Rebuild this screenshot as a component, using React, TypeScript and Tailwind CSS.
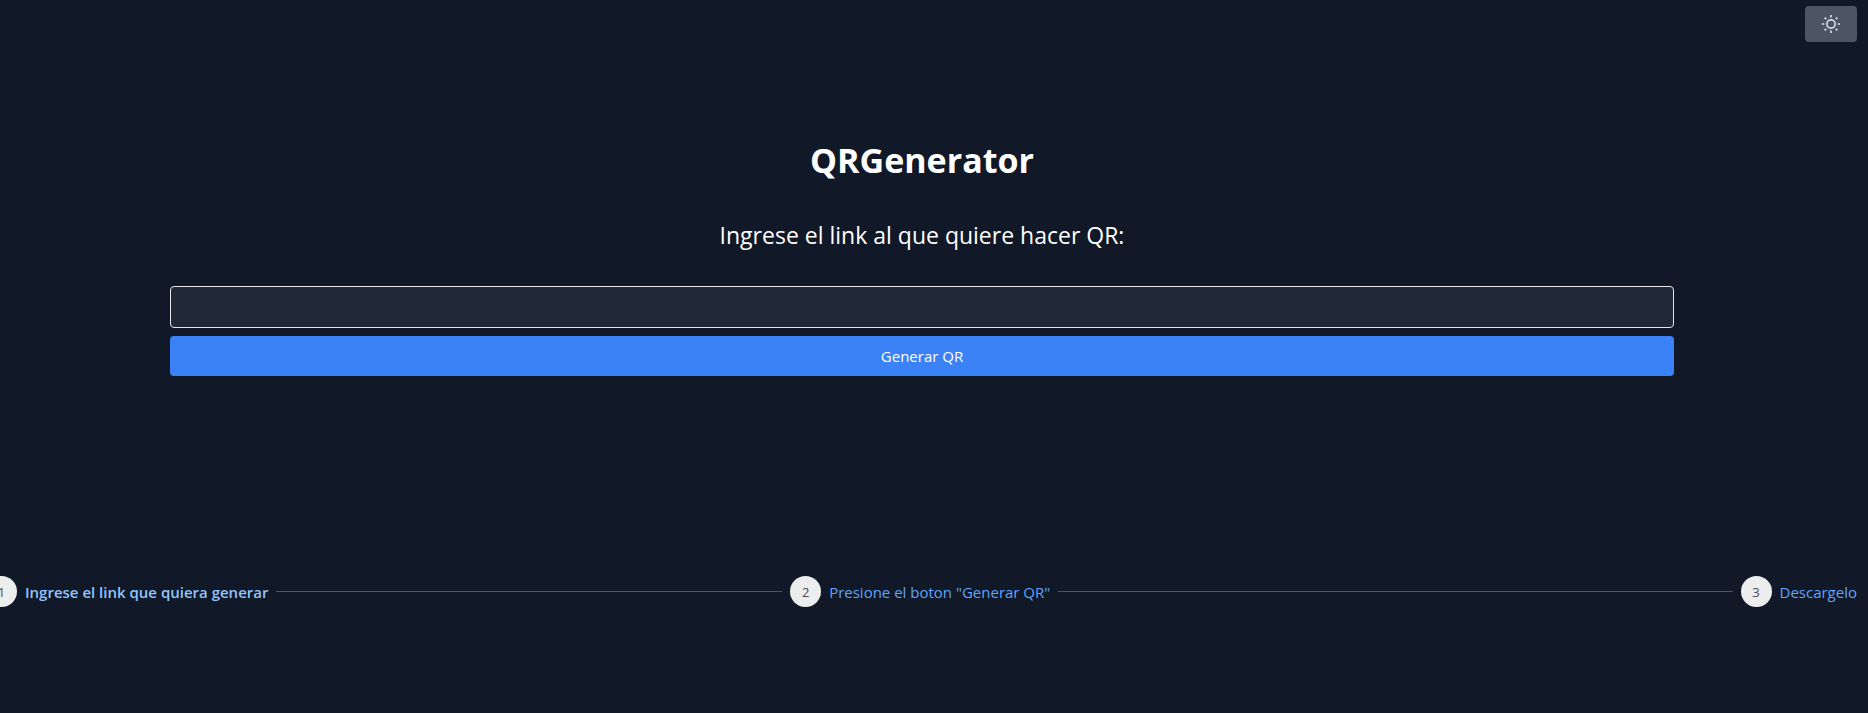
import { useState } from "react";

const steps = [
  { label: "Ingrese el link que quiera generar", text: "font-semibold text-[#93c5fd]", line: "grow-3" },
  { label: 'Presione el boton "Generar QR"', text: "text-[#60a5fa]", line: "grow-4" },
  { label: "Descargelo", text: "text-[#60a5fa]", line: "" },
];

function SunIcon() {
  return (
    <svg viewBox="0 0 20 20" className="size-5" fill="none" stroke="currentColor" strokeWidth="1.7" aria-hidden="true">
      <circle cx="10" cy="10" r="4.1" />
      <path d="M10 1v2.400M10 16.600v2.400M1 10h2.400M16.600 10h2.400M3.600 3.600l1.600 1.600M14.800 14.800l1.600 1.600M3.600 16.400l1.600-1.600M14.800 5.200l1.600-1.600" />
    </svg>
  );
}

export default function App() {
  const [link, setLink] = useState("");
  return (
    <div className="flex min-h-screen flex-col overflow-x-hidden bg-[#111827] pr-[11px] font-['Open_Sans','Noto_Sans',sans-serif] text-white">
      <header className="flex justify-end pt-1.5">
        <button type="button" aria-label="Cambiar tema" className="flex h-9 w-[52px] items-center justify-center rounded bg-[#4b5563] text-[#d8dbe0]">
          <SunIcon />
        </button>
      </header>
      <main className="-ml-3.5 flex flex-col">
        <form onSubmit={(e) => e.preventDefault()} className="mr-[183px] ml-[184px] mt-[98px] flex flex-col">
          <h1 className="text-center text-[34px]/10 font-bold">QRGenerator</h1>
          <label htmlFor="link" className="mt-[39px] text-center text-[23px]/8">
            Ingrese el link al que quiere hacer QR:
          </label>
          <input
            id="link"
            type="text"
            value={link}
            onChange={(e) => setLink(e.target.value)}
            className="mt-[35px] h-[42px] rounded border border-[#e5e7eb] bg-[#1f2937] px-2"
          />
          <button type="submit" className="mt-2 h-10 rounded bg-[#3b82f6] text-[15px]/6">
            Generar QR
          </button>
        </form>
        <ol className="mt-[200px] flex items-center gap-2 text-[15px]/6">
          {steps.map((step, i) => (
            <li key={step.label} className="contents">
              <span className="flex size-[31px] shrink-0 items-center justify-center rounded-full bg-[#eceded] text-[13px]/5 text-[#4b4b55]">
                {i + 1}
              </span>
              <span className={`whitespace-nowrap ${step.text}`}>{step.label}</span>
              {step.line && <span className={`h-px basis-0 bg-[#57534e] ${step.line}`} />}
            </li>
          ))}
        </ol>
      </main>
    </div>
  );
}
